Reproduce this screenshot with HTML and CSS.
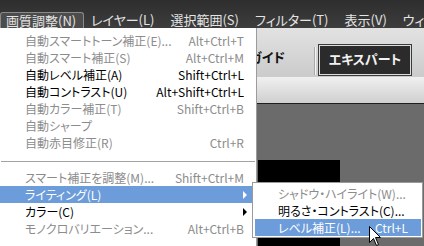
FILE: index.html
```html
<!DOCTYPE html>
<html lang="ja">

<head>
    <meta charset="UTF-8">
    <meta name="viewport" content="width=device-width, initial-scale=1.0">
    <title>画質調整</title>
    <link rel="stylesheet" href="styles.css">
</head>

<body>
    <div class="app">

        <div class="menubar">
            <span class="menu-item active">画質調整(N)</span>
            <span class="menu-sep"></span>
            <span class="menu-item">レイヤー(L)</span>
            <span class="menu-item">選択範囲(S)</span>
            <span class="menu-item">フィルター(T)</span>
            <span class="menu-item">表示(V)</span>
            <span class="menu-item">ウィンドウ(W)</span>
        </div>

        <div class="toolbar">
            <span class="guide">ガイド</span>
            <span class="tool-sep"></span>
            <span class="expert-btn">エキスパート</span>
        </div>
        <div class="subbar"></div>

        <div class="canvas">
            <div class="photo"></div>
        </div>

        <!-- menu desplegado -->
        <div class="dropdown">
            <div class="row disabled"><span>自動スマートトーン補正(E)...</span><span>Alt+Ctrl+T</span></div>
            <div class="row disabled"><span>自動スマート補正(S)</span><span>Alt+Ctrl+M</span></div>
            <div class="row"><span>自動レベル補正(A)</span><span>Shift+Ctrl+L</span></div>
            <div class="row"><span>自動コントラスト(U)</span><span>Alt+Shift+Ctrl+L</span></div>
            <div class="row disabled"><span>自動カラー補正(T)</span><span>Shift+Ctrl+B</span></div>
            <div class="row disabled"><span>自動シャープ</span><span></span></div>
            <div class="row disabled"><span>自動赤目修正(R)</span><span>Ctrl+R</span></div>
            <div class="separator"></div>
            <div class="row disabled"><span>スマート補正を調整(M)...</span><span>Shift+Ctrl+M</span></div>
            <div class="row selected"><span>ライティング(L)</span><span class="arrow"></span></div>
            <div class="row"><span>カラー(C)</span><span class="arrow"></span></div>
            <div class="row disabled"><span>モノクロバリエーション...</span><span>Alt+Ctrl+B</span></div>
        </div>

        <div class="submenu">
            <div class="row disabled"><span>シャドウ・ハイライト(W)...</span><span></span></div>
            <div class="row"><span>明るさ・コントラスト(C)...</span><span></span></div>
            <div class="row selected"><span>レベル補正(L)...</span><span>Ctrl+L</span></div>
        </div>

        <svg class="cursor" width="13" height="21" viewBox="0 0 13 21">
            <path d="M0.5 0.5 L0.5 16.5 L4.5 12.5 L7.5 19.5 L9.5 18.5 L6.5 11.5 L11.5 11.5 Z" fill="#fff" stroke="#000" stroke-width="1" />
        </svg>

    </div>
</body>

</html>
```

FILE: styles.css
```css
body {
    margin: 0;
    background: #6b6b6b;
    font-family: "Noto Sans CJK JP", "Noto Sans", sans-serif;
    font-size: 12px;
    font-feature-settings: "palt";
}

.app {
    position: relative;
    width: 424px;
    height: 246px;
    overflow: hidden;
}

/* barra de menus */

.menubar {
    height: 28px;
    display: flex;
    align-items: flex-end;
    gap: 16px;
    background: linear-gradient(#2e2e2e, #3d3d3d);
    color: #e4e4e4;
    font-size: 13px;
    white-space: nowrap;
}

.menu-item {
    line-height: 15px;
    padding-bottom: 1px;
}

.menu-item.active {
    width: 68px;
    padding: 0 9px 0 5px;
    background: #4c4c4c;
    border: 1px solid #8a8a8a;
    border-bottom: none;
    border-radius: 3px 3px 0 0;
}

.menu-sep {
    width: 1px;
    height: 13px;
    background: #8a8a8a;
    margin: 0 -12px 0 -13px;
}

/* barra de herramientas */

.toolbar {
    height: 49px;
    display: flex;
    justify-content: flex-end;
    align-items: flex-end;
    padding: 0 13px 2px 0;
    box-sizing: border-box;
    background: linear-gradient(#e2e2e2, #cbcbcb);
}

.guide {
    font-weight: bold;
    font-size: 13px;
    line-height: 13px;
    margin-bottom: 12px;
    color: #111;
}

.tool-sep {
    width: 1px;
    height: 28px;
    background: #a9a9a9;
    border-right: 1px solid #f4f4f4;
    margin: 0 3px 0 29px;
}

.expert-btn {
    width: 92px;
    height: 30px;
    display: flex;
    justify-content: center;
    align-items: center;
    padding-bottom: 3px;
    box-sizing: border-box;
    background: #2b2b2b;
    border: 1px solid #dcdcdc;
    box-shadow: 0 0 0 1px #3a3a3a;
    color: #f2f2f2;
    font-weight: bold;
    font-size: 13px;
}

.subbar {
    height: 26px;
    background: linear-gradient(#f0f0f0, #cfcfcf);
    border-bottom: 1px solid #1e1e1e;
}

.canvas {
    height: 142px;
    padding: 56px 0 0 258px;
    box-sizing: border-box;
    background: #6b6b6b;
}

.photo {
    width: 82px;
    height: 86px;
    background: #000;
}

/* menus desplegables */

.dropdown {
    position: absolute;
    left: 0;
    top: 28px;
    bottom: 0;
    width: 257px;
    padding-top: 4px;
    box-sizing: border-box;
    background: #fff;
    border-right: 1px solid #9c9c9c;
}

.row {
    display: flex;
    justify-content: space-between;
    align-items: center;
    height: 17px;
    line-height: 17px;
    padding: 0 12px 0 25px;
    color: #000;
    white-space: nowrap;
}

.row.disabled {
    color: #8c8c8c;
}

.row.selected {
    background: #6c9cd9;
    color: #fff;
}

.separator {
    height: 1px;
    margin: 10px 1px 7px 1px;
    background: #a3a3a3;
}

.arrow {
    width: 0;
    height: 0;
    margin-right: -3px;
    border-top: 4px solid transparent;
    border-bottom: 4px solid transparent;
    border-left: 4px solid #000;
}

.row.selected .arrow {
    border-left-color: #fff;
}

.submenu {
    position: absolute;
    left: 252px;
    top: 182px;
    width: 169px;
    padding: 2px 0 1px;
    background: #fff;
    border: 1px solid #9a9a9a;
}

.submenu .row {
    margin: 0 1px 0 2px;
    padding: 0 13px 0 23px;
}

.cursor {
    position: absolute;
    left: 369px;
    top: 226px;
}
```
